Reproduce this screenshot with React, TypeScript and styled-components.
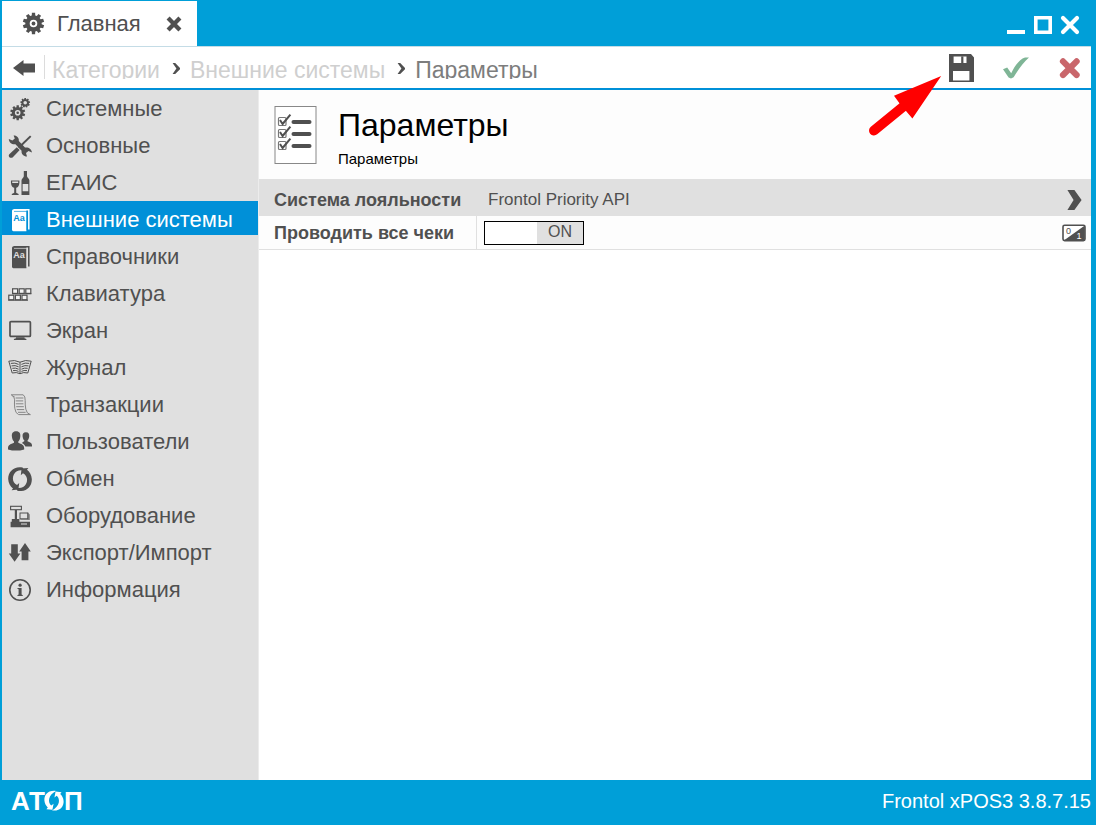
import React, { useState } from "react";
import styled, { createGlobalStyle, css } from "styled-components";

const color = {
  frame: "#009fd8",
  accent: "#0090d8",
  panel: "#e0e0e0",
  surface: "#fdfdfd",
  ink: "#505050",
  faded: "#cfcfcf",
};

const GlobalStyle = createGlobalStyle`
  *, *::before, *::after { box-sizing: border-box; }
  body {
    margin: 0;
    background: ${color.frame};
    color: ${color.ink};
    font-family: "Liberation Sans", Arial, sans-serif;
  }
  button { font: inherit; color: inherit; border: 0; padding: 0; background: none; cursor: pointer; }
  h1, p, ul, ol { margin: 0; padding: 0; }
  ul, ol { list-style: none; }
  svg { display: block; flex: none; }
`;

const Window = styled.div`
  position: relative;
  display: flex;
  flex-direction: column;
  min-height: 100vh;
  padding: 0 5px 0 2px;
  background: ${color.frame};
`;

const TitleBar = styled.header`
  display: flex;
  justify-content: space-between;
  height: 46px;
  padding-top: 1px;
`;

const Tab = styled.div`
  display: flex;
  align-items: center;
  padding: 0 15px 0 20px;
  background: #fff;
  font-size: 22px;
  line-height: 26px;
`;

const TabTitle = styled.span`
  margin: 0 25px 0 12px;
`;

const WindowControls = styled.div`
  display: flex;
  align-items: center;
  gap: 7px;
  padding: 2px 11px 0 0;
`;

const IconButton = styled.button`
  display: flex;
  align-items: center;
  justify-content: center;
`;

const NavBar = styled.nav`
  display: flex;
  align-items: center;
  height: 44px;
  padding: 0 7px 0 10px;
  background: #fff;
  border-top: 1px solid #c4dce6;
  border-bottom: 2px solid ${color.accent};
`;

const Crumbs = styled.ol`
  display: flex;
  flex: 1;
  align-items: center;
  height: 24px;
  margin: 0 0 1px 8px;
  padding-left: 7px;
  overflow: hidden;
  border-left: 1px solid #dcdcdc;
  font-size: 23px;
  line-height: 26px;
`;

const Crumb = styled.li`
  display: flex;
  align-items: center;
  padding-top: 6px;
  white-space: nowrap;
  svg { margin: 0 9px 3px 12px; }
`;

const CrumbLink = styled.a<{ $current?: boolean }>`
  color: ${(p) => (p.$current ? "#7d7d7d" : color.faded)};
  text-decoration: none;
`;

const Actions = styled.div`
  display: flex;
  align-items: center;
  gap: 26px;
`;

const Body = styled.div`
  display: grid;
  grid-template-columns: 256px 1fr;
  flex: 1;
`;

const Sidebar = styled.aside`
  background: ${color.panel};
`;

const Menu = styled.ul`
  display: flex;
  flex-direction: column;
  gap: 3px;
`;

const MenuButton = styled.button<{ $active: boolean }>`
  display: flex;
  align-items: center;
  gap: 14px;
  width: 100%;
  height: 34px;
  padding: 4px 6px 0;
  font-size: 22px;
  line-height: 26px;
  text-align: left;
  white-space: nowrap;
  ${(p) =>
    p.$active &&
    css`
      background: ${color.accent};
      color: #fff;
    `}
`;

const Content = styled.main`
  background: #fff;
  border-left: 1px solid #ececec;
`;

const PageHeader = styled.div`
  display: flex;
  gap: 21px;
  height: 89px;
  padding: 16px 15px 0;
  background: ${color.surface};
  color: #000;
`;

const PageTitle = styled.h1`
  font-size: 32px;
  font-weight: 400;
  line-height: 38px;
`;

const PageNote = styled.p`
  margin-top: 6px;
  font-size: 15px;
  line-height: 18px;
`;

const rowLayout = css`
  display: grid;
  grid-template-columns: 217px 1fr auto;
  align-items: center;
  width: 100%;
  padding-right: 5px;
  font-size: 17px;
  text-align: left;
`;

const LinkRow = styled.button`
  ${rowLayout}
  height: 37px;
  padding-top: 4px;
  background: ${color.panel};
`;

const SettingRow = styled.div`
  ${rowLayout}
  height: 34px;
  background: ${color.surface};
  border-bottom: 1px solid ${color.panel};
`;

const FieldName = styled.label`
  padding-left: 15px;
  font-size: 18px;
  font-weight: 700;
  line-height: 22px;
  white-space: nowrap;
`;

const FieldValue = styled.span`
  padding-left: 12px;
`;

const SwitchCell = styled.span`
  display: flex;
  align-items: center;
  align-self: stretch;
  padding-left: 7px;
  border-left: 1px solid ${color.panel};
`;

const SwitchBox = styled.span<{ $on: boolean }>`
  position: relative;
  display: flex;
  flex-direction: ${(p) => (p.$on ? "row" : "row-reverse")};
  width: 100px;
  height: 24px;
  border: 1px solid #000;
  background: #fff;
`;

const SwitchInput = styled.input`
  position: absolute;
  inset: 0;
  width: 100%;
  height: 100%;
  margin: 0;
  opacity: 0;
  cursor: pointer;
`;

const SwitchKnob = styled.span`
  width: 52px;
`;

const SwitchText = styled.span`
  flex: 1;
  background: ${color.panel};
  font-size: 16px;
  line-height: 20px;
  text-align: center;
`;

const Footer = styled.footer`
  display: flex;
  align-items: center;
  justify-content: space-between;
  height: 45px;
  padding: 0 0 3px 9px;
  color: #fff;
  font-size: 20px;
  line-height: 24px;
`;

const Pointer = styled.svg`
  position: absolute;
  top: 70px;
  right: 152px;
  pointer-events: none;
`;

const gearPath = (cx: number, cy: number, r: number, teeth: number, depth: number) => {
  const pts: string[] = [];
  for (let i = 0; i < teeth; i++) {
    [
      [-0.34, r - depth],
      [-0.24, r],
      [0.24, r],
      [0.34, r - depth],
    ].forEach(([o, rad]) => {
      const a = ((i + o) / teeth) * Math.PI * 2;
      pts.push(`${(cx + rad * Math.sin(a)).toFixed(2)} ${(cy - rad * Math.cos(a)).toFixed(2)}`);
    });
  }
  return `M${pts.join("L")}Z`;
};

const hole = (cx: number, cy: number, r: number) =>
  `M${cx - r} ${cy}a${r} ${r} 0 1 0 ${2 * r} 0a${r} ${r} 0 1 0 ${-2 * r} 0Z`;

const Icon = ({ children }: { children: React.ReactNode }) => (
  <svg width="24" height="24" viewBox="0 0 24 24" fill="currentColor" aria-hidden="true">
    {children}
  </svg>
);

const Gears = () => (
  <Icon>
    <path fillRule="evenodd" d={gearPath(9.7, 15.8, 7.6, 10, 1.8) + hole(9.7, 15.8, 2.8)} />
    <circle cx="9.7" cy="15.8" r="1.3" />
    <path fillRule="evenodd" d={gearPath(17.2, 5.8, 4.9, 9, 1.1) + hole(17.2, 5.8, 1.8)} />
  </Icon>
);

const Tools = () => (
  <Icon>
    <path d="M0.8 5 4.4 6.6 6.8 4.6 5.6 1.5C8.8 1.3 11.4 4 10.8 7L17 13.6C20.2 12.8 23.6 15 24 18.4L20.5 17.1 18 19 19 22.6C15.6 22.6 13 19.8 13.6 16.8L7.4 10.2C4.3 10.9 1.1 8.8 0.8 5Z" />
    <path d="M22 1.4 23.4 2.8 11.4 14.4 10 13Z" />
    <path d="M8.8 13.2 11.7 16 4.6 23.4Q2.8 24.4 1.4 23.2 0.2 21.8 1.3 20.2Z" />
  </Icon>
);

const Drinks = () => (
  <Icon>
    <path fillRule="evenodd" d="M3 9.4H11.4C11.7 13 10.8 16.2 8.2 16.7V21.7L10.6 23V24H3.8V23L6.2 21.7V16.7C3.6 16.2 2.7 13 3 9.4ZM4.2 10.5 4.2 12H10.2V10.5Z" />
    <path fillRule="evenodd" d="M15.8 0H19V5.2C19.2 7 21.4 7.3 21.4 9.5V24H13.5V9.5C13.5 7.3 15.7 7 15.8 5.2ZM14.6 13V20.2H20.3V13Z" />
  </Icon>
);

const Book = ({ cover = "currentColor", ink = color.panel }: { cover?: string; ink?: string }) => (
  <Icon>
    <path d="M5.5 1.8H20.8V21.4" fill="none" stroke="currentColor" strokeWidth="1.5" />
    <path d="M5.4 1.6H18.4V23.2H5.4Q4 23.2 4 21.8V3Q4 1.6 5.4 1.6Z" fill={cover} />
    <path d="M6 3.4H19V22" fill="none" stroke={ink} strokeWidth="0.7" />
    <text x="5.2" y="13.4" fill={ink} fontSize="9" fontWeight="700">Aa</text>
  </Icon>
);

const Keys = () => (
  <Icon>
    <g fill="#f3f3f3" stroke="currentColor" strokeWidth="1.2">
      {[4.6, 11.2, 17.8].map((x) => <rect key={x} x={x} y="6.8" width="5" height="4.6" />)}
      {[0.8, 7.4, 14].map((x) => <rect key={x} x={x} y="13.2" width="5" height="4.6" />)}
    </g>
    <path d="M4 11.8H23.4M0.2 18.2H20" stroke="currentColor" strokeWidth="1" />
  </Icon>
);

const Monitor = () => (
  <Icon>
    <rect x="2" y="2.6" width="20.4" height="14.8" rx="1" fill="none" stroke="currentColor" strokeWidth="1.7" />
    <path d="M8 18.2H16.5V19.2L18.4 20V21H5.9V20L8 19.2Z" />
  </Icon>
);

const Journal = () => (
  <Icon>
    <g fill="none" stroke="currentColor" strokeWidth="1">
      <path d="M12 6.2Q6.5 3.4 0.8 5.2L4.2 17Q8.5 15.8 12 17.7Q15.5 15.8 19.8 17L23.2 5.2Q17.5 3.4 12 6.2V17.7" />
      <path d="M2.8 7.4Q7 6.3 10.6 8.4M3.5 9.9Q7.2 8.9 10.6 10.8M4.3 12.3Q7.5 11.5 10.6 13.2M5 14.6Q8 14 10.6 15.4M21.2 7.4Q17 6.3 13.4 8.4M20.5 9.9Q16.8 8.9 13.4 10.8M19.7 12.3Q16.5 11.5 13.4 13.2M19 14.6Q16 14 13.4 15.4" />
    </g>
  </Icon>
);

const Scroll = () => (
  <Icon>
    <g fill="none" stroke="#858585" strokeWidth="1">
      <path d="M3.2 1.8H15.2Q17.4 3.2 17.2 7.5 17 12 17.8 16.2 18.6 20.8 22.4 21.6H10.6Q7.4 20.4 6.8 15.4 6.2 11 6.6 6.8 6.6 2.8 3.2 1.8Z" />
      <path d="M7.6 5H15.4M7.8 7.9H15.2M7.8 10.8H15.4M8.2 13.7H15.8M8.8 16.6H16.2M10 19.3H17.6M4.6 3.6H6.4" />
    </g>
  </Icon>
);

const Users = () => (
  <Icon>
    <path d="M17.9 2.2C20.7 2.2 21.5 4.2 21.2 6.4 20.9 8.5 20.2 9.8 19.5 10.4V11.2C21.8 12.1 24 12.8 24 15.2V16.6H17.4C16.5 14.7 15.2 13.8 13.8 13.1L16.4 11.1V10.4C15.6 9.8 14.8 8.3 14.6 6.4 14.3 4 15.2 2.2 17.9 2.2Z" />
    <path d="M8.1 1.2C11.6 1.2 12.6 3.6 12.3 6.6 12.1 9.2 11.2 10.9 10.3 11.6V12.7C13.3 13.9 16.2 14.8 16.2 18.2V19.4Q8.1 21.8 0 19.4V18.2C0 14.8 3 13.9 6 12.7V11.6C5.1 10.9 4.1 9.2 3.9 6.6 3.6 3.6 4.6 1.2 8.1 1.2Z" />
  </Icon>
);

const Exchange = () => (
  <Icon>
    <path d="M14.6.5C6-1.4-.2 5 .2 12.2.4 16.2 2.2 19.4 5 21.5L3.6 23.3 10.4 22.6 11.2 15.9 9 18C4.6 15.7 4 10.9 6 7.2 7.9 3.9 11.2 2.5 16.6 3.6Z" />
    <path d="M9.4 23.5C18 25.4 24.2 19 23.8 11.8 23.6 7.8 21.8 4.6 19 2.5L20.4.7 13.6 1.4 12.8 8.1 15 6C19.4 8.3 20 13.1 18 16.8 16.1 20.1 12.8 21.5 7.4 20.4Z" transform="translate(0 .2)" />
  </Icon>
);

const Register = () => (
  <Icon>
    <rect x="2.6" y="2.3" width="10.8" height="3.4" fill="none" stroke="currentColor" strokeWidth="1.1" />
    <path d="M6.8 6H9V15.5H6.8ZM3.8 15H11.4V17.8H22V23.3H2.6V17.8H3.8Z" />
    <rect x="12" y="9" width="7.8" height="5.8" fill="none" stroke="currentColor" strokeWidth="1" />
    <path d="M19.6 8.2 21.8 10.5V16H12.4V15.2H19.6Z" opacity=".65" />
    <path d="M13 20H19" stroke={color.panel} strokeWidth="1" />
  </Icon>
);

const Transfer = () => (
  <Icon>
    <path d="M3.2 3.2H9.8V12.4H12.4L6.6 20.8 0.8 12.4H3.2ZM17 2 22.8 10.6H20.4V19.2H13.6V10.6H11.2Z" />
  </Icon>
);

const Info = () => (
  <Icon>
    <circle cx="12" cy="12" r="10.2" fill="none" stroke="currentColor" strokeWidth="1.6" />
    <circle cx="12.1" cy="7.2" r="1.6" />
    <path d="M9.4 9.9H13.6V16.6L14.8 17.2V18H9.4V17.2L10.6 16.6V11.2L9.4 10.8Z" />
  </Icon>
);

const CrumbArrow = () => (
  <svg width="9" height="12" viewBox="0 0 9 12" aria-hidden="true">
    <path d="M.6 0H3.2L8 5V6.2L3.2 11H.6L4.4 5.6Z" fill={color.ink} />
  </svg>
);

const menu = [
  { name: "Системные", icon: <Gears /> },
  { name: "Основные", icon: <Tools /> },
  { name: "ЕГАИС", icon: <Drinks /> },
  { name: "Внешние системы", icon: <Book cover="#fff" ink={color.accent} /> },
  { name: "Справочники", icon: <Book /> },
  { name: "Клавиатура", icon: <Keys /> },
  { name: "Экран", icon: <Monitor /> },
  { name: "Журнал", icon: <Journal /> },
  { name: "Транзакции", icon: <Scroll /> },
  { name: "Пользователи", icon: <Users /> },
  { name: "Обмен", icon: <Exchange /> },
  { name: "Оборудование", icon: <Register /> },
  { name: "Экспорт/Импорт", icon: <Transfer /> },
  { name: "Информация", icon: <Info /> },
];

const crumbs = ["Категории", "Внешние системы", "Параметры"];

const Checklist = () => (
  <svg width="43" height="59" viewBox="0 0 43 59" aria-hidden="true">
    <rect x="1" y="0.5" width="41" height="57" fill="#fff" stroke="#888" />
    {[0, 12, 24].map((dy) => (
      <g key={dy} transform={`translate(0 ${dy})`} fill="none" stroke={color.ink}>
        <rect x="4.5" y="11.5" width="7.5" height="8" rx="1" strokeWidth="1.2" stroke="#777" />
        <path d="M6 14 8.6 18 16.4 8.6" strokeWidth="2" />
        <path d="M19.5 16H35.5" strokeWidth="4" strokeLinecap="round" />
      </g>
    ))}
  </svg>
);

const Logo = () => (
  <svg width="74" height="22" viewBox="0 0 74 22" role="img" aria-label="АТОЛ" fill="#fff">
    <g fontSize="26" fontWeight="700">
      <text x="0" y="20">A</text>
      <text x="18" y="20">T</text>
      <text x="53" y="20">П</text>
    </g>
    <path d="M45 1C37 0 33 5 33.4 10.5 33.6 13.5 35 15.8 36.8 17.4L35.4 19.2 41.4 19.8 42.6 13.8 40.3 15.6C36.5 12.5 37 5 45 1Z" />
    <path d="M41 20.4C49 21.4 53 16.4 52.6 10.9 52.4 7.9 51 5.6 49.2 4L50.6 2.2 44.6 1.6 43.4 7.6 45.7 5.8C49.5 8.9 49 16.4 41 20.4Z" />
  </svg>
);

export default function App() {
  const [active, setActive] = useState("Внешние системы");
  const [allReceipts, setAllReceipts] = useState(true);

  return (
    <Window>
      <GlobalStyle />
      <TitleBar>
        <Tab>
          <svg width="23" height="23" viewBox="0 0 23 23" fill={color.ink} aria-hidden="true">
            <path fillRule="evenodd" d={gearPath(11.5, 11.5, 10.8, 10, 2.6) + hole(11.5, 11.5, 3.8)} />
            <circle cx="11.5" cy="11.5" r="1.9" />
          </svg>
          <TabTitle>Главная</TabTitle>
          <IconButton aria-label="Закрыть вкладку">
            <svg width="16" height="16" viewBox="0 0 20 20"><path d="M2.6 2.6 17.4 17.4M17.4 2.6 2.6 17.4" stroke={color.ink} strokeWidth="5.4" /></svg>
          </IconButton>
        </Tab>
        <WindowControls>
          <IconButton aria-label="Свернуть">
            <svg width="20" height="20" viewBox="0 0 20 20"><path d="M1 15H19V19H1Z" fill="#fff" /></svg>
          </IconButton>
          <IconButton aria-label="Развернуть">
            <svg width="20" height="20" viewBox="0 0 20 20"><path d="M2.8 2.8H17.2V17.2H2.8Z" fill="none" stroke="#fff" strokeWidth="3.6" /></svg>
          </IconButton>
          <IconButton aria-label="Закрыть">
            <svg width="20" height="20" viewBox="0 0 20 20"><path d="M3 3 17 17M17 3 3 17" stroke="#fff" strokeWidth="4.2" strokeLinecap="round" /></svg>
          </IconButton>
        </WindowControls>
      </TitleBar>

      <NavBar>
        <IconButton aria-label="Назад">
          <svg width="24" height="18" viewBox="0 0 24 18"><path d="M1 9 11.5 1V4.4H23V13.6H11.5V17Z" fill={color.ink} /></svg>
        </IconButton>
        <Crumbs>
          {crumbs.map((name, i) => (
            <Crumb key={name}>
              {i > 0 && <CrumbArrow />}
              <CrumbLink href="#" $current={i === crumbs.length - 1}>{name}</CrumbLink>
            </Crumb>
          ))}
        </Crumbs>
        <Actions>
          <IconButton aria-label="Сохранить">
            <svg width="28" height="28" viewBox="0 0 28 28">
              <path fillRule="evenodd" fill={color.ink} d="M1 0H23L26 3.4V28H1ZM5.6 2.4V9H18.5V2.4ZM5 17V26.6H21.4V17Z" />
              <path d="M13.2 2.4H15.4V9H13.2Z" fill={color.ink} />
            </svg>
          </IconButton>
          <IconButton aria-label="Применить">
            <svg width="28" height="24" viewBox="0 0 28 24"><path d="M1 13.2 5.2 11.6 9.2 17.2C13 9.6 17.6 3.2 23 1.6H27C21.6 6.4 16.6 13.4 11.6 21.2L9 22.6 6.6 21.4Z" fill="#7fb596" /></svg>
          </IconButton>
          <IconButton aria-label="Отменить">
            <svg width="28" height="24" viewBox="0 0 28 24"><path d="M7 5.4 20.6 19M20.6 5.4 7 19" stroke="#c9666b" strokeWidth="6.2" strokeLinecap="round" /></svg>
          </IconButton>
        </Actions>
      </NavBar>

      <Body>
        <Sidebar>
          <Menu>
            {menu.map((item) => (
              <li key={item.name}>
                <MenuButton $active={item.name === active} onClick={() => setActive(item.name)}>
                  {item.icon}
                  {item.name}
                </MenuButton>
              </li>
            ))}
          </Menu>
        </Sidebar>
        <Content>
          <PageHeader>
            <Checklist />
            <div>
              <PageTitle>Параметры</PageTitle>
              <PageNote>Параметры</PageNote>
            </div>
          </PageHeader>
          <LinkRow>
            <FieldName as="span">Система лояльности</FieldName>
            <FieldValue>Frontol Priority API</FieldValue>
            <svg width="20" height="22" viewBox="0 0 20 22" aria-hidden="true">
              <path d="M1.4 1H8.4L15.6 11 8.4 21H1.4L7.6 11Z" fill={color.ink} />
            </svg>
          </LinkRow>
          <SettingRow>
            <FieldName htmlFor="all-receipts">Проводить все чеки</FieldName>
            <SwitchCell>
              <SwitchBox $on={allReceipts}>
                <SwitchKnob />
                <SwitchText>{allReceipts ? "ON" : "OFF"}</SwitchText>
                <SwitchInput
                  id="all-receipts"
                  type="checkbox"
                  role="switch"
                  checked={allReceipts}
                  onChange={(e) => setAllReceipts(e.target.checked)}
                />
              </SwitchBox>
            </SwitchCell>
            <svg width="24" height="18" viewBox="0 0 24 18" aria-hidden="true">
              <rect x="1" y="1.2" width="22" height="15.4" rx="1.6" fill="#fff" stroke={color.ink} strokeWidth="1.6" />
              <path d="M22.8 1.4V16.4H1.8Z" fill={color.ink} />
              <text x="4" y="9.6" fontSize="9" fill={color.ink}>0</text>
              <text x="14.6" y="15" fontSize="9" fill="#fff">1</text>
            </svg>
          </SettingRow>
        </Content>
      </Body>

      <Footer>
        <Logo />
        <span>Frontol xPOS3 3.8.7.15</span>
      </Footer>

      <Pointer width="78" height="68" viewBox="0 0 78 68" aria-hidden="true">
        <path d="M8 60.5 38 36" stroke="#f00" strokeWidth="10" strokeLinecap="round" />
        <path d="M75.2 6 28 25.8 34 34 40 41 46.4 48.6Z" fill="#f00" />
      </Pointer>
    </Window>
  );
}
